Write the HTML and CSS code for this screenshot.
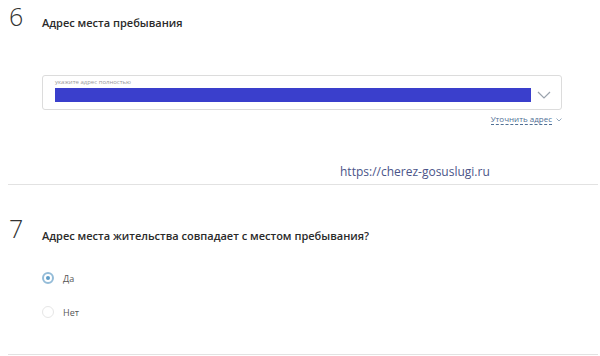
FILE: index.html
```html
<!DOCTYPE html>
<html lang="ru">
<head>
    <meta charset="UTF-8">
    <meta name="viewport" content="width=device-width, initial-scale=1.0">
    <title>Адрес места пребывания</title>
    <link rel="stylesheet" href="styles.css">
</head>
<body>
    <section class="step step-first">
        <div class="step-num">6</div>
        <div class="step-body">
            <h2 class="step-title">Адрес места пребывания</h2>
            <div class="address-field">
                <span class="field-label">укажите адрес полностью</span>
                <div class="field-row">
                    <div class="field-value"></div>
                    <svg class="field-arrow" width="14" height="8" viewBox="0 0 14 8">
                        <path d="M1 1 L7 7 L13 1" fill="none" stroke="#9aa3ad" stroke-width="1.2"/>
                    </svg>
                </div>
            </div>
            <div class="refine-row">
                <a class="refine-link" href="#">Уточнить адрес</a>
                <svg class="refine-arrow" width="6" height="4" viewBox="0 0 6 4">
                    <path d="M0.5 0.5 L3 3 L5.5 0.5" fill="none" stroke="#8aa0b8" stroke-width="0.9"/>
                </svg>
            </div>
            <div class="watermark">https://cherez-gosuslugi.ru</div>
        </div>
    </section>

    <section class="step step-second">
        <div class="step-num">7</div>
        <div class="step-body">
            <h2 class="step-title">Адрес места жительства совпадает с местом пребывания?</h2>
            <div class="radio-list">
                <label class="radio">
                    <span class="radio-mark checked"></span>
                    <span class="radio-text">Да</span>
                </label>
                <label class="radio">
                    <span class="radio-mark"></span>
                    <span class="radio-text">Нет</span>
                </label>
            </div>
        </div>
    </section>
</body>
</html>
```

FILE: styles.css
```css
body {
    margin: 0;
    background: #fff;
    font-family: "Open Sans", "Noto Sans", sans-serif;
    color: #222;
}

.step {
    display: flex;
    margin: 0 2px 0 8px;
    border-bottom: 1px solid #e2e2e2;
}

.step-first {
    padding-top: 4px;
}

.step-second {
    padding-top: 31px;
    padding-bottom: 35px;
}

.step-num {
    width: 33px;
    padding-left: 1px;
    font-size: 25px;
    font-weight: 300;
    line-height: 25px;
    color: #333;
    flex-shrink: 0;
}

.step-body {
    flex: 1;
}

.step-title {
    margin: 12px 0 0;
    font-size: 11px;
    font-weight: 600;
    line-height: 14px;
    color: #2a2a2a;
}

.step-second .step-title {
    margin-top: 13px;
}

/* address input */
.address-field {
    width: 518px;
    height: 33px;
    margin-top: 45px;
    border: 1px solid #dcdcdc;
    border-radius: 3px;
    box-sizing: content-box;
}

.field-label {
    display: block;
    padding: 2px 0 0 12px;
    font-size: 6px;
    line-height: 8px;
    color: #999;
}

.field-row {
    display: flex;
    align-items: center;
    padding-left: 12px;
}

.field-value {
    width: 476px;
    height: 14px;
    margin-top: 2px;
    background: #3a3fcc;
}

.field-arrow {
    margin-left: 6px;
    margin-top: 2px;
}

.refine-row {
    display: flex;
    justify-content: flex-end;
    align-items: center;
    width: 520px;
    margin-top: 4px;
}

.refine-link {
    font-size: 8px;
    line-height: 10px;
    color: #4f6f95;
    text-decoration: none;
    border-bottom: 1px dashed #4f6f95;
}

.refine-arrow {
    margin-left: 4px;
}

.watermark {
    margin: 39px 0 0 298px;
    padding-bottom: 5px;
    font-size: 12px;
    line-height: 15px;
    color: #4a5488;
}

/* radio buttons */
.radio-list {
    display: flex;
    flex-direction: column;
    gap: 20px;
    margin-top: 28px;
}

.radio {
    display: flex;
    align-items: center;
    height: 14px;
}

.radio-mark {
    width: 10px;
    height: 10px;
    border: 1px solid #e6e6e6;
    border-radius: 50%;
    background: #fff;
    position: relative;
}

.radio-mark.checked {
    border: 2px solid #94bcd8;
    width: 8px;
    height: 8px;
}

.radio-mark.checked::after {
    content: "";
    position: absolute;
    left: 2px;
    top: 2px;
    width: 4px;
    height: 4px;
    border-radius: 50%;
    background: #5d9cc8;
}

.radio-text {
    margin-left: 9px;
    font-size: 9px;
    color: #555;
}
```
